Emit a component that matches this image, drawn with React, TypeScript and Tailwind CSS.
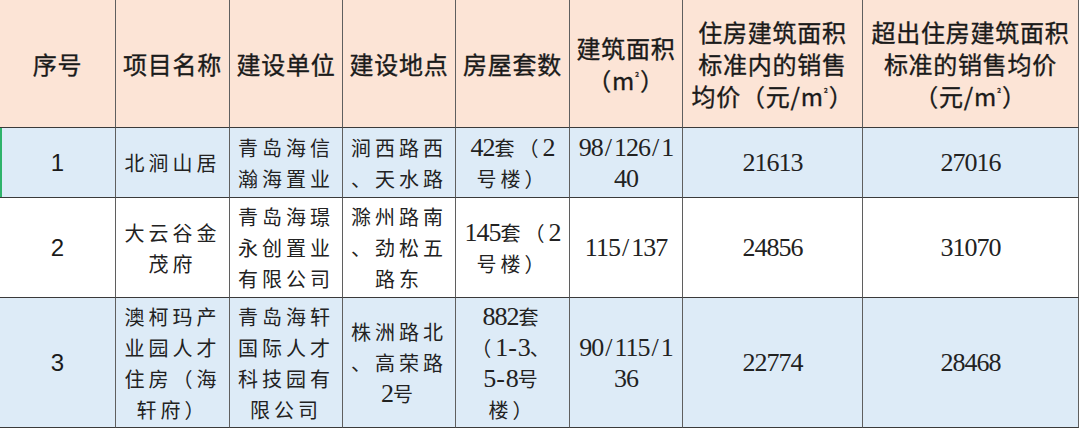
import React from "react";

function Rich({ text }: { text: string }) {
  const parts = text.match(/[0-9]+|\/|-|[^0-9\/-]+/g) || [];
  return (
    <>
      {parts.map((p, i) => {
        if (/^[0-9]+$/.test(p))
          return (
            <span key={i} className="font-['Liberation_Serif',serif] text-[26px] tracking-[-1px] leading-none">
              {p}
            </span>
          );
        if (p === "/")
          return (
            <span key={i} className="font-['Liberation_Serif',serif] text-[26px] leading-none mx-[2px]">
              /
            </span>
          );
        if (p === "-")
          return (
            <span key={i} className="font-['Liberation_Serif',serif] text-[26px] leading-none mx-[1px]">
              -
            </span>
          );
        return (
          <span key={i} className="tracking-[4px]">
            {p}
          </span>
        );
      })}
    </>
  );
}

const Sup = () => <span className="text-[10px] leading-none align-super">²</span>;

const headers: React.ReactNode[] = [
  <div>序号</div>,
  <div>项目名称</div>,
  <div>建设单位</div>,
  <div>建设地点</div>,
  <div>房屋套数</div>,
  <>
    <div>建筑面积</div>
    <div>
      （m<Sup />）
    </div>
  </>,
  <>
    <div>住房建筑面积</div>
    <div>标准内的销售</div>
    <div>
      均价（元/m<Sup />）
    </div>
  </>,
  <>
    <div>超出住房建筑面积</div>
    <div>标准的销售均价</div>
    <div>
      （元/m<Sup />）
    </div>
  </>,
];

type Row = { bg: string; no: string; cells: string[][]; first?: boolean };

const rows: Row[] = [
  {
    bg: "bg-[#ddebf7]",
    no: "1",
    first: true,
    cells: [
      ["北涧山居"],
      ["青岛海信", "瀚海置业"],
      ["涧西路西", "、天水路"],
      ["42套（2", "号楼）"],
      ["98/126/1", "40"],
      ["21613"],
      ["27016"],
    ],
  },
  {
    bg: "bg-white",
    no: "2",
    cells: [
      ["大云谷金", "茂府"],
      ["青岛海璟", "永创置业", "有限公司"],
      ["滁州路南", "、劲松五", "路东"],
      ["145套（2", "号楼）"],
      ["115/137"],
      ["24856"],
      ["31070"],
    ],
  },
  {
    bg: "bg-[#ddebf7]",
    no: "3",
    cells: [
      ["澳柯玛产", "业园人才", "住房（海", "轩府）"],
      ["青岛海轩", "国际人才", "科技园有", "限公司"],
      ["株洲路北", "、高荣路", "2号"],
      ["882套", "（1-3、", "5-8号", "楼）"],
      ["90/115/1", "36"],
      ["22774"],
      ["28468"],
    ],
  },
];

const cellBase =
  "flex flex-col items-center justify-center text-center border-r border-b border-r-[#5f5f5f] border-b-[#3a3a3a]";

export default function App() {
  return (
    <div className="w-[1080px] h-[431px] bg-white overflow-hidden">
      <div className="grid grid-cols-[116px_114px_113px_113px_114px_113px_180px_216px] grid-rows-[128px_70px_100px_130px]">
        {headers.map((h, i) => (
          <div
            key={"h" + i}
            className={`${cellBase} bg-[#fce4d6] font-['Noto_Sans_CJK_SC',sans-serif] text-[24px] tracking-[0.75px] leading-[32px] text-[#1a1a1a] [-webkit-text-stroke:0.35px_#1a1a1a] whitespace-nowrap`}
          >
            {h}
          </div>
        ))}
        {rows.map((r, ri) => (
          <React.Fragment key={"r" + ri}>
            <div
              className={`${cellBase} ${r.bg} ${
                r.first ? "shadow-[inset_2px_0_0_#2fb36b]" : ""
              } font-['Liberation_Sans',sans-serif] text-[24px] text-[#1a1a1a]`}
            >
              {r.no}
            </div>
            {r.cells.map((lines, ci) => (
              <div
                key={ci}
                className={`${cellBase} ${r.bg} font-['Noto_Sans_CJK_SC',sans-serif] text-[20px] leading-[31px] text-[#222] whitespace-nowrap`}
              >
                {lines.map((l, li) => (
                  <div key={li} className="h-[31px]">
                    <Rich text={l} />
                  </div>
                ))}
              </div>
            ))}
          </React.Fragment>
        ))}
      </div>
    </div>
  );
}
